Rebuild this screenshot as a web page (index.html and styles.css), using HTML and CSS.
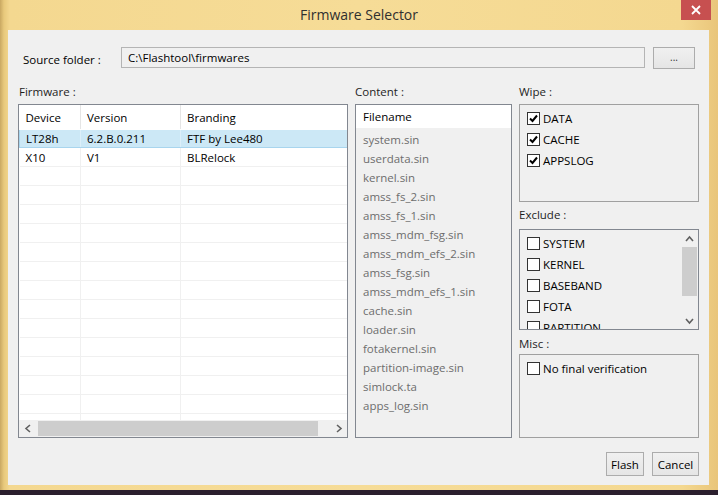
FILE: index.html
```html
<!DOCTYPE html>
<html>
<head>
<meta charset="utf-8">
<title>Firmware Selector</title>
<link rel="stylesheet" href="styles.css">
</head>
<body>
<div class="frame">
  <div class="titlebar">
    <div class="title">Firmware Selector</div>
    <div class="close">
      <svg width="10" height="10" viewBox="0 0 10 10"><path d="M1 1 L9 9 M9 1 L1 9" stroke="#fff" stroke-width="1.8" fill="none"/></svg>
    </div>
  </div>
  <div class="client">
    <div class="source-row">
      <span class="source-label">Source folder :</span>
      <div class="input">C:\Flashtool\firmwares</div>
      <div class="btn dots">...</div>
    </div>
    <div class="main">
      <div class="col col-fw">
        <div class="label">Firmware :</div>
        <div class="box fw-box">
          <div class="fw-scroll">
            <table class="fw-table">
              <colgroup><col class="c1"><col class="c2"><col class="c3"></colgroup>
              <thead><tr><th>Device</th><th>Version</th><th>Branding</th></tr></thead>
              <tbody>
                <tr class="sel"><td>LT28h</td><td>6.2.B.0.211</td><td>FTF by Lee480</td></tr>
                <tr><td>X10</td><td>V1</td><td>BLRelock</td></tr>
                <tr><td></td><td></td><td></td></tr>
                <tr><td></td><td></td><td></td></tr>
                <tr><td></td><td></td><td></td></tr>
                <tr><td></td><td></td><td></td></tr>
                <tr><td></td><td></td><td></td></tr>
                <tr><td></td><td></td><td></td></tr>
                <tr><td></td><td></td><td></td></tr>
                <tr><td></td><td></td><td></td></tr>
                <tr><td></td><td></td><td></td></tr>
                <tr><td></td><td></td><td></td></tr>
                <tr><td></td><td></td><td></td></tr>
                <tr><td></td><td></td><td></td></tr>
                <tr><td></td><td></td><td></td></tr>
                <tr><td></td><td></td><td></td></tr>
              </tbody>
            </table>
          </div>
          <div class="hscroll">
            <div class="arrow"><svg width="8" height="9" viewBox="0 0 8 9"><path d="M6 1 L2 4.5 L6 8" stroke="#606060" stroke-width="1.6" fill="none"/></svg></div>
            <div class="hthumb"></div>
            <div class="arrow"><svg width="8" height="9" viewBox="0 0 8 9"><path d="M2 1 L6 4.5 L2 8" stroke="#606060" stroke-width="1.6" fill="none"/></svg></div>
          </div>
        </div>
      </div>
      <div class="col col-content">
        <div class="label">Content :</div>
        <div class="box content-box">
          <div class="content-head">Filename</div>
          <div class="files">
            <div>system.sin</div>
            <div>userdata.sin</div>
            <div>kernel.sin</div>
            <div>amss_fs_2.sin</div>
            <div>amss_fs_1.sin</div>
            <div>amss_mdm_fsg.sin</div>
            <div>amss_mdm_efs_2.sin</div>
            <div>amss_fsg.sin</div>
            <div>amss_mdm_efs_1.sin</div>
            <div>cache.sin</div>
            <div>loader.sin</div>
            <div>fotakernel.sin</div>
            <div>partition-image.sin</div>
            <div>simlock.ta</div>
            <div>apps_log.sin</div>
          </div>
        </div>
      </div>
      <div class="col col-right">
        <div class="label">Wipe :</div>
        <div class="box wipe-box">
          <div class="check"><span class="cb on"><svg width="11" height="11" viewBox="0 0 11 11"><path d="M2 5.5 L4.5 8 L9 2.5" stroke="#000" stroke-width="2" fill="none"/></svg></span>DATA</div>
          <div class="check"><span class="cb on"><svg width="11" height="11" viewBox="0 0 11 11"><path d="M2 5.5 L4.5 8 L9 2.5" stroke="#000" stroke-width="2" fill="none"/></svg></span>CACHE</div>
          <div class="check"><span class="cb on"><svg width="11" height="11" viewBox="0 0 11 11"><path d="M2 5.5 L4.5 8 L9 2.5" stroke="#000" stroke-width="2" fill="none"/></svg></span>APPSLOG</div>
        </div>
        <div class="label label-exclude">Exclude :</div>
        <div class="box exclude-box">
          <div class="exclude-list">
            <div class="check"><span class="cb"></span>SYSTEM</div>
            <div class="check"><span class="cb"></span>KERNEL</div>
            <div class="check"><span class="cb"></span>BASEBAND</div>
            <div class="check"><span class="cb"></span>FOTA</div>
            <div class="check"><span class="cb"></span>PARTITION</div>
          </div>
          <div class="vscroll">
            <div class="varrow"><svg width="9" height="8" viewBox="0 0 9 8"><path d="M1 6 L4.5 2 L8 6" stroke="#606060" stroke-width="1.6" fill="none"/></svg></div>
            <div class="vthumb"></div>
            <div class="vspace"></div>
            <div class="varrow"><svg width="9" height="8" viewBox="0 0 9 8"><path d="M1 2 L4.5 6 L8 2" stroke="#606060" stroke-width="1.6" fill="none"/></svg></div>
          </div>
        </div>
        <div class="label label-misc">Misc :</div>
        <div class="box misc-box">
          <div class="check"><span class="cb"></span>No final verification</div>
        </div>
      </div>
    </div>
    <div class="actions">
      <div class="btn flash">Flash</div>
      <div class="btn cancel">Cancel</div>
    </div>
  </div>
</div>
</body>
</html>
```

FILE: styles.css
```css
html, body {
  margin: 0;
  padding: 0;
  width: 718px;
  height: 495px;
  overflow: hidden;
  background: #2b1f2e;
}

.frame {
  width: 718px;
  height: 490px;
  background: linear-gradient(90deg, #c9a862 0px, #e8c97c 4px, #f4d890 10px, #f6dc97 50%, #f4d890 95%, #e9c57a 100%);
  display: flex;
  flex-direction: column;
  font-family: "Open Sans", "Noto Sans", sans-serif;
  font-size: 11.5px;
  color: #000;
}

.titlebar {
  height: 30px;
  position: relative;
  display: flex;
  justify-content: center;
  align-items: center;
}

.title {
  font-size: 14px;
  color: #2f2f2f;
  margin-top: -1px;
}

.close {
  position: absolute;
  right: 7px;
  top: 0;
  width: 30px;
  height: 20px;
  background: #c75050;
  display: flex;
  align-items: center;
  justify-content: center;
}

.client {
  margin-left: 8px;
  width: 701px;
  height: 455px;
  background: #f0f0f0;
  box-sizing: border-box;
  padding: 17px 0 0 10px;
  display: flex;
  flex-direction: column;
}

.source-row {
  display: flex;
  align-items: center;
  height: 22px;
}

.source-label {
  width: 103px;
  padding-left: 5px;
  padding-top: 2px;
  box-sizing: border-box;
}

.input {
  width: 524px;
  height: 21px;
  box-sizing: border-box;
  border: 1px solid #b4b4b4;
  background: #f0f0f0;
  padding: 1px 0 0 6px;
  line-height: 18px;
  align-self: flex-start;
}

.btn {
  box-sizing: border-box;
  border: 1px solid #acacac;
  background: linear-gradient(#f0f0f0, #e5e5e5);
  display: flex;
  align-items: center;
  justify-content: center;
}

.dots {
  width: 42px;
  height: 22px;
  margin-left: 8px;
  font-size: 10px;
  padding-bottom: 3px;
  color: #333;
}

.main {
  display: grid;
  grid-template-columns: 330px 157px 180px;
  column-gap: 7px;
  margin-top: 13px;
}

.col {
  display: flex;
  flex-direction: column;
}

.label {
  height: 19px;
  padding-top: 3px;
  line-height: 14px;
  color: #1e1e1e;
}

.col-fw .label { padding-left: 1px; }

.box {
  box-sizing: border-box;
  border: 1px solid #a0a0a0;
}

.fw-box {
  height: 334px;
  background: #fff;
  border-color: #828790;
  display: flex;
  flex-direction: column;
}

.fw-scroll {
  flex: 1;
  overflow: hidden;
}

.fw-table {
  table-layout: fixed;
  border-collapse: collapse;
  width: 100%;
}

.c1 { width: 61px; }
.c2 { width: 100px; }

.fw-table th {
  font-weight: normal;
  text-align: left;
  height: 24px;
  padding: 0 0 0 6px;
  border-right: 1px solid #e5e5e5;
  border-bottom: 1px solid #fff;
}

.fw-table td {
  height: 18px;
  padding: 0 0 0 6px;
  border-right: 1px solid #f0f0f0;
  border-bottom: 1px solid #f0f0f0;
  white-space: nowrap;
}

.fw-table th:last-child, .fw-table td:last-child { border-right: none; }

.fw-table tr.sel td {
  background: #cce8f6;
  border-bottom-color: #a8d5ee;
  border-top: 1px solid #a8d5ee;
  height: 17px;
}

.fw-table tr.sel td:first-child { border-left: 1px solid #a8d5ee; }
.fw-table tr.sel td { border-right-color: #dceff9; }

.hscroll {
  height: 17px;
  background: #f0f0f0;
  display: flex;
  align-items: center;
}

.arrow {
  width: 17px;
  height: 17px;
  display: flex;
  align-items: center;
  justify-content: center;
}

.hthumb {
  height: 15px;
  flex: 1;
  margin: 0 12px 0 2px;
  background: #cdcdcd;
}

.content-box {
  height: 334px;
  background: #f0f0f0;
  border-color: #828790;
}

.content-head {
  background: #fff;
  height: 23px;
  line-height: 24px;
  padding-left: 7px;
  color: #000;
}

.files {
  padding-top: 2px;
  color: #6d6d6d;
}

.files div {
  height: 19px;
  line-height: 19px;
  padding-left: 7px;
}

.wipe-box {
  height: 98px;
  padding: 3px 0 0 7px;
}

.check {
  display: flex;
  align-items: center;
  height: 21px;
  color: #000;
}

.cb {
  width: 13px;
  height: 13px;
  box-sizing: border-box;
  border: 1px solid #333;
  background: #fff;
  margin-right: 3px;
  display: flex;
  align-items: center;
  justify-content: center;
}

.label-exclude {
  margin-top: 6px;
  padding-top: 0;
  height: 21px;
}

.label-misc {
  margin-top: 7px;
  padding-top: 0;
  height: 17px;
}

.exclude-box {
  height: 101px;
  display: flex;
  background: #fff;
  border-color: #828790;
  overflow: hidden;
}

.exclude-list {
  flex: 1;
  padding: 3px 0 0 7px;
  background: #f0f0f0;
}

.vscroll {
  width: 17px;
  background: #f0f0f0;
  display: flex;
  flex-direction: column;
}

.varrow {
  height: 17px;
  display: flex;
  align-items: center;
  justify-content: center;
}

.vthumb {
  height: 49px;
  margin: 0 1px;
  background: #cdcdcd;
}

.vspace { flex: 1; }

.misc-box {
  height: 84px;
  padding: 3px 0 0 7px;
}

.actions {
  display: flex;
  justify-content: flex-end;
  gap: 8px;
  padding-right: 10px;
  margin-top: 14px;
}

.flash {
  width: 38px;
  height: 24px;
}

.cancel {
  width: 47px;
  height: 24px;
}
```
